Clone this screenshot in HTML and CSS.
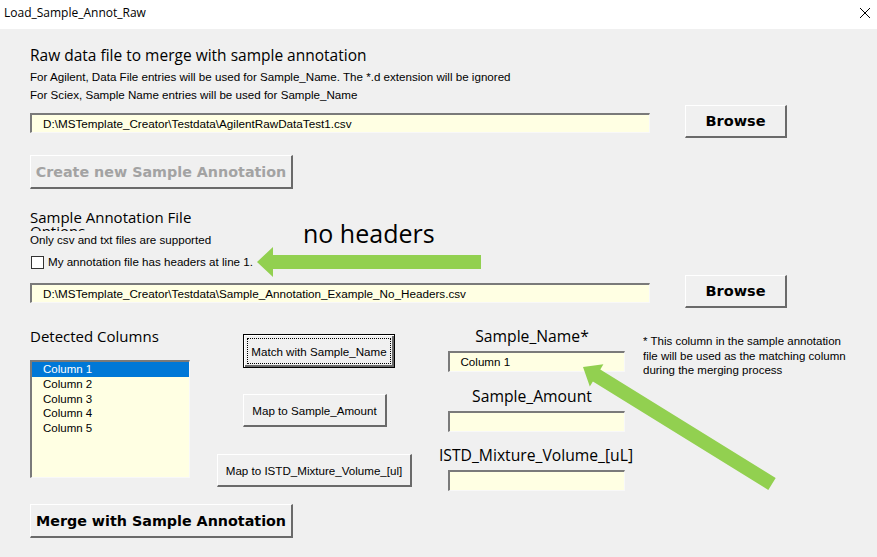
FILE: index.html
```html
<!DOCTYPE html>
<html>
<head>
<meta charset="utf-8">
<link rel="stylesheet" href="styles.css">
</head>
<body>
<div class="window">
  <div class="titlebar">
    <span class="title">Load_Sample_Annot_Raw</span>
    <svg class="close" width="12" height="12" viewBox="0 0 12 12"><path d="M1 1 L11 11 M11 1 L1 11" stroke="#000" stroke-width="1" fill="none"/></svg>
  </div>
  <div class="form">
    <div class="heading">Raw data file to merge with sample annotation</div>
    <p class="info first">For Agilent, Data File entries will be used for Sample_Name. The *.d extension will be ignored</p>
    <p class="info">For Sciex, Sample Name entries will be used for Sample_Name</p>
    <div class="file-row row-a">
      <div class="field path">D:\MSTemplate_Creator\Testdata\AgilentRawDataTest1.csv</div>
      <button class="btn bold browse">Browse</button>
    </div>
    <button class="btn bold create" disabled>Create new Sample Annotation</button>
    <div class="subheading">Sample Annotation File</div>
    <div class="clipped"><span>Options</span></div>
    <p class="info">Only csv and txt files are supported</p>
    <label class="check"><span class="box"></span>My annotation file has headers at line 1.</label>
    <div class="file-row row-b">
      <div class="field path">D:\MSTemplate_Creator\Testdata\Sample_Annotation_Example_No_Headers.csv</div>
      <button class="btn bold browse">Browse</button>
    </div>
    <div class="lower">
      <div class="col-list">
        <div class="subheading list-title">Detected Columns</div>
        <div class="listbox">
          <div class="item selected">Column 1</div>
          <div class="item">Column 2</div>
          <div class="item">Column 3</div>
          <div class="item">Column 4</div>
          <div class="item">Column 5</div>
        </div>
        <button class="btn bold merge">Merge with Sample Annotation</button>
      </div>
      <div class="col-actions">
        <button class="btn small match">Match with Sample_Name</button>
        <button class="btn small amount">Map to Sample_Amount</button>
        <button class="btn small istd">Map to ISTD_Mixture_Volume_[ul]</button>
      </div>
      <div class="col-targets">
        <div class="target-label shift">Sample_Name*</div>
        <div class="field target">Column 1</div>
        <div class="target-label gap shift">Sample_Amount</div>
        <div class="field target"></div>
        <div class="target-label gap2">ISTD_Mixture_Volume_[uL]</div>
        <div class="field target"></div>
      </div>
      <div class="col-note">* This column in the sample annotation<br>file will be used as the matching column<br>during the merging process</div>
    </div>
  </div>
  <div class="callout">no headers</div>
  <svg class="arrows" width="877" height="557" viewBox="0 0 877 557">
    <polygon fill="#92d050" points="257,262 273,247 273,255 481,255 481,269 273,269 273,277"/>
    <polygon fill="#92d050" points="583,367 603.4,364.3 600.3,369.4 775.7,478 768.3,490 592.9,381.4 589.8,386.5"/>
  </svg>
</div>
</body>
</html>
```
FILE: styles.css
```css
* { box-sizing: border-box; }
html, body { margin: 0; padding: 0; }
body { background: #f0f0f0; }
.window {
  position: relative;
  width: 877px;
  height: 557px;
  overflow: hidden;
  background: #f0f0f0;
  font-family: "Liberation Sans", Arial, sans-serif;
  color: #000;
}
.titlebar {
  height: 29px;
  background: #fff;
  display: flex;
  align-items: center;
  justify-content: space-between;
  padding: 0 6px 4px 4px;
}
.title { font-family: "Open Sans", sans-serif; font-size: 12px; }
.form { padding-left: 30px; display: flex; flex-direction: column; align-items: flex-start; }
.heading {
  margin-top: 16px;
  font-family: "Open Sans", sans-serif;
  font-size: 15.5px;
  line-height: 20px;
}
.info { margin: 0; font-size: 11.6px; line-height: 18px; }
.info.first { margin-top: 3px; }
.file-row { display: flex; align-items: flex-start; gap: 35px; }
.row-a { margin-top: 1px; }
.row-b { margin-top: 4px; }
.field {
  background: #ffffe3;
  border-style: solid;
  border-width: 2px 1px 1px 2px;
  border-color: #7a7a7a #f8f8f8 #f8f8f8 #7a7a7a;
  font-size: 11.7px;
}
.path { width: 620px; height: 20px; margin-top: 8px; padding-left: 11px; line-height: 17px; }
.btn {
  font-family: "Liberation Sans", Arial, sans-serif;
  background: #f0f0f0;
  border-style: solid;
  border-width: 1px 2px 2px 1px;
  border-color: #fff #6a6a6a #6a6a6a #fff;
  color: #000;
  padding: 0;
  margin: 0;
}
.bold { font-family: "DejaVu Sans", sans-serif; font-weight: bold; }
.browse { width: 102px; height: 33px; font-size: 14.5px; }
.create { width: 263px; height: 34px; margin-top: 17px; font-size: 14.3px; color: #a3a3a3; }
.subheading {
  margin-top: 19px;
  font-family: "Open Sans", sans-serif;
  font-size: 15px;
  line-height: 18px;
}
.clipped {
  margin-top: -2px;
  height: 7px;
  overflow: hidden;
  font-family: "Open Sans", sans-serif;
  font-size: 15px;
  line-height: 15px;
}
.check { display: flex; align-items: center; margin-top: 4px; font-size: 11.6px; line-height: 18px; }
.box { width: 13px; height: 13px; margin-left: 1px; margin-right: 4px; background: #fff; border: 1px solid #333; }
.lower { display: flex; align-items: flex-start; }
.col-list { width: 160px; display: flex; flex-direction: column; }
.list-title { margin-top: 19px; }
.listbox {
  margin-top: 15px;
  width: 160px;
  height: 118px;
  background: #ffffe3;
  border-style: solid;
  border-width: 2px 1px 1px 2px;
  border-color: #7a7a7a #f8f8f8 #f8f8f8 #7a7a7a;
}
.item { font-size: 11.5px; line-height: 14.5px; padding-left: 11px; }
.item.selected { background: #0078d7; color: #fff; height: 15px; }
.merge { width: 263px; height: 34px; margin-top: 26px; font-size: 14.3px; }
.col-actions { width: 247px; padding-top: 26px; display: flex; flex-direction: column; align-items: flex-start; }
.small { font-size: 11.6px; }
.match {
  width: 152px; height: 34px; margin-left: 53px;
  border: 1px solid #000;
  box-shadow: inset 1px 1px 0 #fff, inset -2px -2px 0 #6a6a6a;
  outline: 1px dotted #000;
  outline-offset: -5px;
}
.amount { width: 144px; height: 33px; margin-left: 53px; margin-top: 26px; }
.istd { width: 195px; height: 33px; margin-left: 27px; margin-top: 27px; }
.col-targets { width: 198px; display: flex; flex-direction: column; align-items: center; }
.target-label { margin-top: 19px; font-family: "Open Sans", sans-serif; font-size: 15.7px; line-height: 18px; text-align: center; white-space: nowrap; }
.target-label.shift { margin-right: 8px; }
.target-label.gap { margin-top: 15px; }
.target-label.gap2 { margin-top: 14px; }
.target { width: 177px; height: 21px; margin-top: 6px; padding-left: 11px; line-height: 18px; font-size: 11.6px; }
.col-note { margin-left: 8px; margin-top: 26px; font-size: 11.5px; line-height: 14.5px; height: 43px; overflow: hidden; white-space: nowrap; }
.callout {
  position: absolute;
  left: 303px;
  top: 218px;
  font-family: "Open Sans", sans-serif;
  font-size: 25px;
  line-height: 30px;
}
.arrows { position: absolute; left: 0; top: 0; pointer-events: none; }
```
